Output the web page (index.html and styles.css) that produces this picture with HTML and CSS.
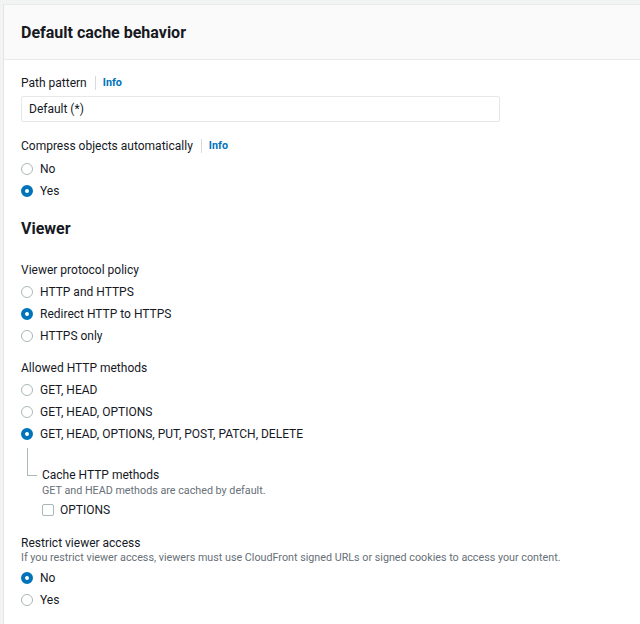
FILE: index.html
```html
<!DOCTYPE html>
<html>
<head>
<meta charset="utf-8">
<link rel="stylesheet" href="styles.css">
</head>
<body>
<div class="card">
  <div class="card-header"><h2>Default cache behavior</h2></div>
  <div class="card-body">
    <div class="label-row"><span class="label">Path pattern</span><span class="info">Info</span></div>
    <div class="input">Default (*)</div>

    <div class="label-row mt14"><span class="label">Compress objects automatically</span><span class="info">Info</span></div>
    <div class="radios mt1">
      <div class="opt"><span class="radio"></span>No</div>
      <div class="opt"><span class="radio on"></span>Yes</div>
    </div>

    <h3>Viewer</h3>

    <div class="label">Viewer protocol policy</div>
    <div class="radios">
      <div class="opt"><span class="radio"></span>HTTP and HTTPS</div>
      <div class="opt"><span class="radio on"></span>Redirect HTTP to HTTPS</div>
      <div class="opt"><span class="radio"></span>HTTPS only</div>
    </div>

    <div class="label mt12">Allowed HTTP methods</div>
    <div class="radios">
      <div class="opt"><span class="radio"></span>GET, HEAD</div>
      <div class="opt"><span class="radio"></span>GET, HEAD, OPTIONS</div>
      <div class="opt"><span class="radio on"></span>GET, HEAD, OPTIONS, PUT, POST, PATCH, DELETE</div>
    </div>

    <div class="nested">
      <div class="label">Cache HTTP methods</div>
      <div class="desc tight">GET and HEAD methods are cached by default.</div>
      <div class="opt"><span class="check"></span>OPTIONS</div>
    </div>

    <div class="label mt13">Restrict viewer access</div>
    <div class="desc tight2">If you restrict viewer access, viewers must use CloudFront signed URLs or signed cookies to access your content.</div>
    <div class="radios mt1">
      <div class="opt"><span class="radio on"></span>No</div>
      <div class="opt"><span class="radio"></span>Yes</div>
    </div>
  </div>
</div>
</body>
</html>
```

FILE: styles.css
```css
html, body {
  margin: 0;
  padding: 0;
  background: #f2f3f3;
  overflow: hidden;
}
body {
  font-family: Roboto, "Liberation Sans", sans-serif;
  color: #16191f;
  font-size: 12px;
  width: 640px;
  height: 624px;
}
.card {
  margin: 4px -40px 0 3px;
  background: #ffffff;
  border-left: 1px solid #e3e6e6;
  border-top: 1px solid #e9ebeb;
  height: 640px;
}
.card-header {
  height: 55px;
  box-sizing: border-box;
  padding: 1px 0 0 17px;
  background: #fafafa;
  border-bottom: 1px solid #e9ebeb;
  display: flex;
  align-items: center;
}
.card-header h2 {
  margin: 0;
  font-size: 16px;
  font-weight: 700;
  line-height: 22px;
}
.card-body {
  padding: 13px 17px 0;
}
.label-row {
  display: flex;
  align-items: center;
  height: 20px;
}
.label {
  line-height: 20px;
  font-size: 12px;
}
.info {
  margin-left: 8px;
  padding-left: 7px;
  border-left: 1px solid #d5dbdb;
  line-height: 14px;
  font-size: 10.8px;
  font-weight: 700;
  color: #0073bb;
}
.input {
  margin-top: 3px;
  height: 24px;
  width: 470px;
  border: 1px solid #e6e8e8;
  border-radius: 2px;
  padding-left: 7px;
  line-height: 24px;
  font-size: 12px;
}
.mt14 { margin-top: 14px; }
.mt1 { margin-top: 1px; }
.mt12 { margin-top: 12px; }
.mt13 { margin-top: 13px; }
.opt {
  display: flex;
  align-items: center;
  height: 22px;
  box-sizing: border-box;
  padding-top: 2px;
  font-size: 12px;
}
.radio {
  width: 12px;
  height: 12px;
  box-sizing: border-box;
  border: 1px solid #aab7b8;
  border-radius: 50%;
  margin: 0 7px 0 0;
  flex: none;
}
.radio.on {
  border: 4px solid #0073bb;
}
.check {
  width: 12px;
  height: 12px;
  box-sizing: border-box;
  border: 1px solid #aab7b8;
  border-radius: 2px;
  margin-right: 6px;
  flex: none;
}
h3 {
  margin: 17px 0 20px;
  font-size: 16px;
  font-weight: 700;
  line-height: 22px;
}
.nested {
  position: relative;
  padding: 21px 0 0 21px;
}
.nested::before {
  content: "";
  position: absolute;
  top: 4px;
  left: 6px;
  width: 9px;
  height: 27px;
  border-left: 1px solid #aab7b8;
  border-bottom: 1px solid #aab7b8;
}
.desc {
  font-size: 10.75px;
  line-height: 14px;
  color: #687078;
}
.tight { margin-top: -1px; }
.tight2 { margin-top: -2px; }
```
